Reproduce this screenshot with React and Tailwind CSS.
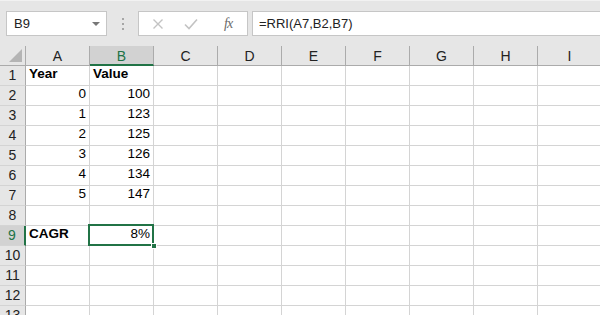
import React from 'react';

const COLS = ['A', 'B', 'C', 'D', 'E', 'F', 'G', 'H', 'I'];

const data = {
  1: { A: { v: 'Year', bold: true }, B: { v: 'Value', bold: true } },
  2: { A: { v: '0', right: true }, B: { v: '100', right: true } },
  3: { A: { v: '1', right: true }, B: { v: '123', right: true } },
  4: { A: { v: '2', right: true }, B: { v: '125', right: true } },
  5: { A: { v: '3', right: true }, B: { v: '126', right: true } },
  6: { A: { v: '4', right: true }, B: { v: '134', right: true } },
  7: { A: { v: '5', right: true }, B: { v: '147', right: true } },
  9: { A: { v: 'CAGR', bold: true }, B: { v: '8%', right: true } },
};

const FormulaBar = () => (
  <div className="h-[46px] bg-[#e6e6e6] border-t border-[#f2f2f2] flex items-start pt-[10px] pl-[6px]">
    {/* Name box */}
    <div className="w-[101px] h-[25px] bg-white border border-[#c6c6c6] flex items-center justify-between pl-[7px] pr-[6px] text-[13px] text-[#222]">
      <span>B9</span>
      <span className="w-0 h-0 border-l-[4px] border-r-[4px] border-t-[4px] border-l-transparent border-r-transparent border-t-[#777]"></span>
    </div>
    <div className="w-[31px] h-[25px] flex flex-col items-center justify-center gap-[3px]">
      <span className="w-[2px] h-[2px] bg-[#a6a6a6]"></span>
      <span className="w-[2px] h-[2px] bg-[#a6a6a6]"></span>
      <span className="w-[2px] h-[2px] bg-[#a6a6a6]"></span>
    </div>
    {/* Cancel / Enter / fx */}
    <div className="w-[110px] h-[25px] bg-white border border-[#c6c6c6] flex items-center pl-[13px] gap-[20px]">
      <svg width="12" height="12" viewBox="0 0 12 12">
        <path d="M1.5 1.5 L10.5 10.5 M10.5 1.5 L1.5 10.5" stroke="#c3c3c3" strokeWidth="1.4" fill="none" />
      </svg>
      <svg width="14" height="12" viewBox="0 0 14 12">
        <path d="M1 6.5 L5 10.5 L13 1.5" stroke="#c3c3c3" strokeWidth="1.6" fill="none" />
      </svg>
      <span className="ml-[6px] text-[14px] italic text-[#6a6a6a] font-['Liberation_Serif',serif] tracking-[-1px]">fx</span>
    </div>
    <div className="ml-[4px] flex-1 h-[25px] bg-white border border-[#c6c6c6] border-r-0 flex items-center pl-[6px] text-[13px] text-[#222]">
      =RRI(A7,B2,B7)
    </div>
  </div>
);

const Grid = () => {
  const rows = Array.from({ length: 13 }, (_, i) => i + 1);
  return (
    <div className="grid grid-cols-[26px_repeat(9,64px)] auto-rows-[20px]">
      {/* Header row */}
      <div className="relative bg-[#e6e6e6] border-r border-b border-[#ababab]">
        <svg className="absolute right-[3px] bottom-[3px]" width="13" height="13" viewBox="0 0 13 13">
          <polygon points="13,0 13,13 0,13" fill="#b4b4b4" />
        </svg>
      </div>
      {COLS.map((c) =>
        c === 'B' ? (
          <div key={c} className="bg-[#d2d2d2] border-r border-[#ababab] border-b-2 border-b-[#217346] flex items-center justify-center text-[14px] text-[#217346] pt-[2px]">
            {c}
          </div>
        ) : (
          <div key={c} className="bg-[#e6e6e6] border-r border-b border-[#ababab] flex items-center justify-center text-[14px] text-[#222] pt-[2px]">
            {c}
          </div>
        )
      )}
      {rows.map((r) => (
        <React.Fragment key={r}>
          {r === 9 ? (
            <div className="bg-[#d2d2d2] border-r-2 border-r-[#217346] border-b border-b-[#d4d4d4] flex items-center justify-center text-[14px] text-[#217346]">
              {r}
            </div>
          ) : (
            <div className="bg-[#e6e6e6] border-r border-r-[#ababab] border-b border-b-[#d4d4d4] flex items-center justify-center text-[14px] text-[#222]">
              {r}
            </div>
          )}
          {COLS.map((c) => {
            const cell = data[r] && data[r][c];
            const selected = r === 9 && c === 'B';
            return (
              <div
                key={c}
                className={`relative bg-white border-r border-b border-[#d4d4d4] flex items-end pb-[1px] text-[13.5px] text-black ${cell && cell.right ? 'justify-end pr-[3px]' : 'justify-start pl-[3px]'} ${cell && cell.bold ? 'font-bold' : ''} ${selected ? 'z-10' : ''}`}
              >
                {cell ? cell.v : ''}
                {selected && (
                  <>
                    <span className="absolute left-[-2px] top-[-2px] right-[-1px] bottom-[-1px] border-2 border-[#217346]"></span>
                    <span className="absolute right-[-4px] bottom-[-4px] w-[6px] h-[6px] bg-[#217346] border border-white"></span>
                  </>
                )}
              </div>
            );
          })}
        </React.Fragment>
      ))}
    </div>
  );
};

export default function App() {
  return (
    <div className="w-[600px] h-[315px] overflow-hidden bg-white font-['Liberation_Sans',Arial,sans-serif]">
      <FormulaBar />
      <Grid />
    </div>
  );
}
